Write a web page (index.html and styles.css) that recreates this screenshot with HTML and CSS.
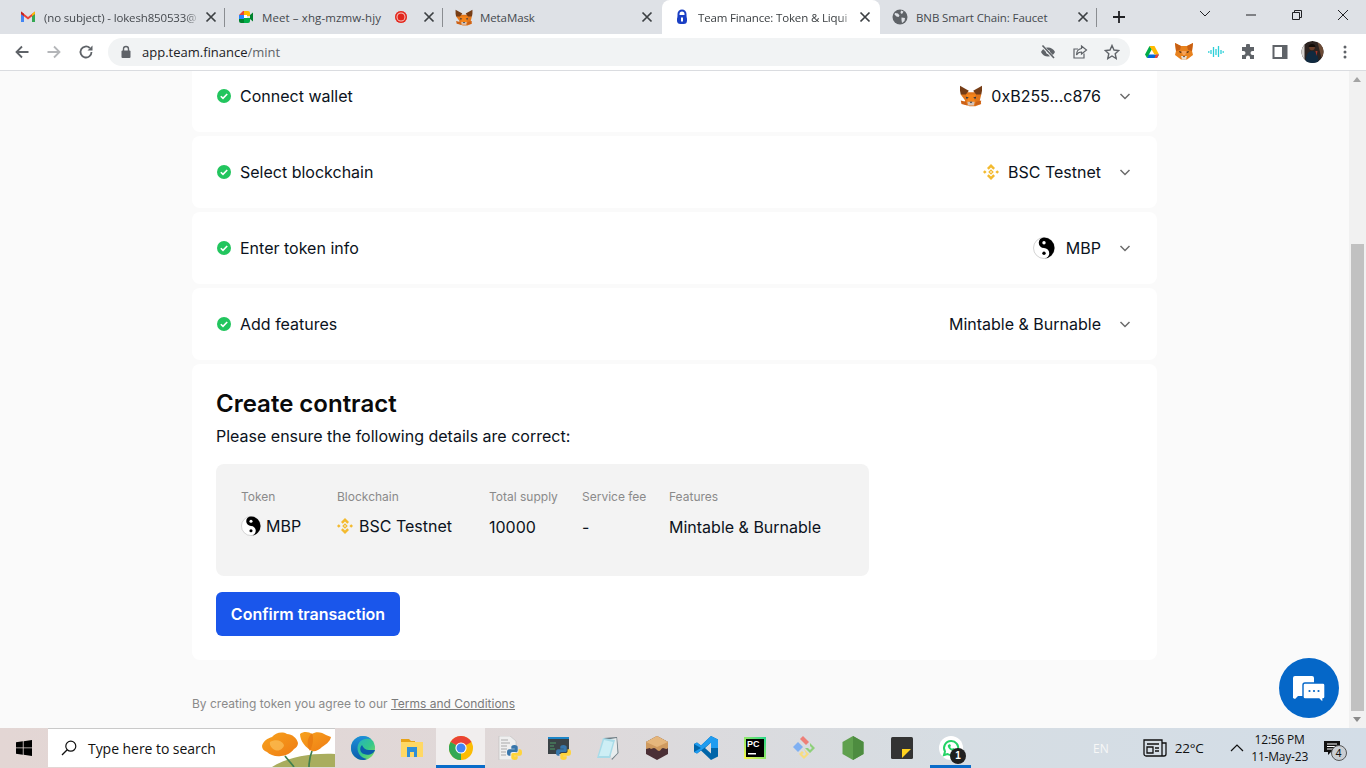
FILE: index.html
```html
<!DOCTYPE html>
<html lang="en">
<head>
<meta charset="utf-8">
<title>Team Finance: Token &amp; Liquidity</title>
<link rel="stylesheet" href="styles.css">
</head>
<body>
<svg class="defs" width="0" height="0" aria-hidden="true">
  <defs>
    <symbol id="fox" viewBox="0 0 32 30">
      <path fill="#e2761b" d="M2 13 8 10h16l6 3-2 8 2 5-8 3h-8l-8-3 2-5z"/>
      <path fill="#763d16" d="M1 1 13 8 9 13 2 13 1 8z"/>
      <path fill="#763d16" d="M31 1 19 8l4 5 7 0 1-5z"/>
      <path fill="#f6851b" d="M9 13h14l-3 6 2 4h-12l2-4z"/>
      <path fill="#d7c1b3" d="M11 23h10l-1 5h-8z"/>
      <path fill="#233447" d="M9 16l4 1-3 2zM23 16l-4 1 3 2zM14 23h4l-2 2z"/>
      <path fill="#cd6116" d="M2 21l7 2 2 5-8-2zM30 21l-7 2-2 5 8-2z"/>
    </symbol>
    <symbol id="bnb" viewBox="0 0 16 16">
      <g fill="#f3ba2f">
        <path d="M8 0 12 4 10.300 5.700 8 3.400 5.700 5.700 4 4z"/>
        <path d="M8 16 4 12 5.700 10.300 8 12.600 10.300 10.300 12 12z"/>
        <path d="M0 8 1.800 6.200 3.600 8 1.800 9.800z"/>
        <path d="M16 8 14.200 6.200 12.400 8 14.200 9.800z"/>
        <path d="M8 5.200 10.800 8 8 10.800 5.200 8zM8 7 7 8l1 1 1-1z" fill-rule="evenodd"/>
      </g>
    </symbol>
    <symbol id="yin" viewBox="0 0 22 22">
      <circle cx="11" cy="11" r="10.500" fill="#fff" stroke="#b5b5b5" stroke-width=".6"/>
      <path fill="#000" d="M11 .5a10.500 10.500 0 0 1 0 21 5.250 5.250 0 0 0 0-10.500 5.250 5.250 0 0 1 0-10.500z"/>
      <circle cx="11" cy="5.750" r="1.700" fill="#fff"/>
      <circle cx="11" cy="16.250" r="1.700" fill="#000"/>
    </symbol>
    <symbol id="check" viewBox="0 0 14 14">
      <circle cx="7" cy="7" r="7" fill="#22c55e"/>
      <path d="M3.800 7.200 6 9.400 10.200 5" fill="none" stroke="#fff" stroke-width="1.600"/>
    </symbol>
    <symbol id="chev" viewBox="0 0 12 12">
      <path d="M1.500 4 6 8.500 10.500 4" fill="none" stroke="#6b6b6b" stroke-width="1.500"/>
    </symbol>
    <symbol id="close" viewBox="0 0 16 16">
      <path d="M3.500 3.500 12.500 12.500M12.500 3.500 3.500 12.500" stroke="#3c4043" stroke-width="1.700" fill="none"/>
    </symbol>
    <symbol id="py" viewBox="0 0 14 14">
      <path fill="#3776ab" d="M7 0C4.500 0 4 1 4 2v1.500h3.200V4H2C.8 4 0 5 0 7s.8 3 2 3h1.200V8.500C3.200 7.300 4 6.500 5.200 6.500h3.300c1 0 1.500-.8 1.500-1.700V2C10 1 9 0 7 0z"/>
      <path fill="#ffd43b" d="M7 14c2.500 0 3-1 3-2v-1.500H6.800V10H12c1.200 0 2-1 2-3s-.8-3-2-3h-1.200v1.500c0 1.200-.8 2-2 2H5.500C4.500 7.500 4 8.300 4 9.200V12c0 1 1 2 3 2z"/>
    </symbol>
  </defs>
</svg>

<header class="tabstrip">
  <div class="tab tab-sep">
    <svg class="tab-icon" viewBox="0 0 16 16"><path fill="#4285f4" d="M1 4v9h3V7z"/><path fill="#34a853" d="M12 7v6h3V4z"/><path fill="#ea4335" d="M1 2.500 8 8l7-5.500V5L8 10.500 1 5z"/><path fill="#c5221f" d="M1 2.500 4 4.800V7L1 5z"/><path fill="#fbbc04" d="M15 2.500 12 4.800V7L15 5z"/></svg>
    <span class="tab-title fade">(no subject) - lokesh850533@</span>
    <svg class="tab-close"><use href="#close"/></svg>
  </div>
  <div class="tab tab-sep">
    <svg class="tab-icon" viewBox="0 0 16 16"><path fill="#00832d" d="M1 9h5v5H3a2 2 0 0 1-2-2z"/><path fill="#ea4335" d="M5 2h5v4H1z"/><path fill="#2684fc" d="M1 6h5v4H1z"/><path fill="#ffba00" d="M6 2h4a2 2 0 0 1 2 2v3H6z"/><path fill="#00ac47" d="M6 9h6v3a2 2 0 0 1-2 2H6z"/><path fill="#00832d" d="M12 6l3-2.500v9L12 10z"/><path fill="#fff" d="M6 6h3v3H6z"/></svg>
    <span class="tab-title tab-title-meet">Meet – xhg-mzmw-hjy</span>
    <span class="rec"></span>
    <svg class="tab-close"><use href="#close"/></svg>
  </div>
  <div class="tab">
    <svg class="tab-icon tab-icon-fox"><use href="#fox"/></svg>
    <span class="tab-title">MetaMask</span>
    <svg class="tab-close"><use href="#close"/></svg>
  </div>
  <div class="tab tab-active">
    <svg class="tab-icon" viewBox="0 0 16 16"><path fill="none" stroke="#1a3fc4" stroke-width="2" d="M8 1.500a3.500 3.500 0 0 1 3.500 3.500v2h-7V5A3.500 3.500 0 0 1 8 1.500z"/><rect x="3" y="6.500" width="10" height="8.500" rx="3.500" fill="#1a3fc4"/><rect x="7" y="8.500" width="2" height="4" fill="#fff"/></svg>
    <span class="tab-title fade">Team Finance: Token &amp; Liqui</span>
    <svg class="tab-close"><use href="#close"/></svg>
  </div>
  <div class="tab tab-sep">
    <svg class="tab-icon" viewBox="0 0 16 16"><circle cx="8" cy="8" r="7.500" fill="#5f6368"/><path fill="#dee1e6" d="M3 4l3 .5 1.500 2-1 1.500-2-.5-2-2zM9 1.500l2.500 1L10 5 8.500 4zM9.500 8.500l3.500.5-.5 3-2.500 2-.5-3z"/></svg>
    <span class="tab-title">BNB Smart Chain: Faucet</span>
    <svg class="tab-close"><use href="#close"/></svg>
  </div>
  <svg class="newtab" viewBox="0 0 14 14"><path d="M7 1v12M1 7h12" stroke="#202124" stroke-width="1.800"/></svg>
  <div class="winctl">
    <svg class="win-btn" viewBox="0 0 46 30"><path d="M18 11l5 5 5-5" fill="none" stroke="#202124"/></svg>
    <svg class="win-btn" viewBox="0 0 46 30"><path d="M18 15h10" stroke="#202124"/></svg>
    <svg class="win-btn" viewBox="0 0 46 30"><path d="M18.500 12.500h7v7h-7zM20.500 12.500v-2h7v7h-2" fill="none" stroke="#202124"/></svg>
    <svg class="win-btn" viewBox="0 0 46 30"><path d="M18 10l10 10M28 10 18 20" stroke="#202124"/></svg>
  </div>
</header>

<nav class="toolbar">
  <span class="tool"><svg viewBox="0 0 16 16"><path d="M14.500 8H2.500M8 2.500 2.500 8 8 13.500" fill="none" stroke="#5f6368" stroke-width="1.800"/></svg></span>
  <span class="tool"><svg viewBox="0 0 16 16"><path d="M1.500 8h12M8 2.500 13.500 8 8 13.500" fill="none" stroke="#b4b6b9" stroke-width="1.800"/></svg></span>
  <span class="tool"><svg viewBox="0 0 16 16"><path d="M13.500 8A5.500 5.500 0 1 1 11.800 4" fill="none" stroke="#5f6368" stroke-width="1.800"/><path d="M14.500 1.500v5h-5z" fill="#5f6368"/></svg></span>
  <div class="omnibox">
    <svg class="lock" viewBox="0 0 12 14"><path d="M3.500 6V4a2.500 2.500 0 0 1 5 0v2" fill="none" stroke="#5f6368" stroke-width="1.400"/><rect x="1.500" y="5.500" width="9" height="7.500" rx="1" fill="#5f6368"/></svg>
    <span class="url">app.team.finance<span class="url-path">/mint</span></span>
    <span class="tool"><svg viewBox="0 0 16 16"><path d="M1 8c1.500-3 4-4.500 7-4.500S13.500 5 15 8c-1.500 3-4 4.500-7 4.500S2.500 11 1 8z" fill="#5f6368"/><circle cx="8" cy="8" r="2" fill="#f1f3f4"/><path d="M2 1.500 14 14.500" stroke="#f1f3f4" stroke-width="3"/><path d="M2.500 1.500 14 14" stroke="#5f6368" stroke-width="1.600"/></svg></span>
    <span class="tool"><svg viewBox="0 0 16 16"><path d="M12 9.500V14H2V5h4" fill="none" stroke="#5f6368" stroke-width="1.200"/><path d="M9.500 2 14.500 6 9.500 10V8C7 8 5.500 9 4.500 11c0-4 2-6 5-6.500z" fill="none" stroke="#5f6368" stroke-width="1.200"/></svg></span>
    <span class="tool"><svg viewBox="0 0 16 16"><path d="M8 1.500 10 6l4.800.5-3.600 3.200 1 4.800L8 12l-4.200 2.500 1-4.800L1.200 6.500 6 6z" fill="none" stroke="#5f6368" stroke-width="1.400"/></svg></span>
  </div>
  <div class="ext">
    <span class="tool"><svg viewBox="0 0 16 16"><path fill="#0066da" d="M4 10.500h11L13 14H3z"/><path fill="#00ac47" d="M5.500 2 1 10.500 3 14 8 5z"/><path fill="#ffba00" d="M5.500 2h5L15 10.500h-4.500z"/><path fill="#ea4335" d="M13 14 15 10.500h-3L10.500 14z"/></svg></span>
    <span class="tool"><svg class="ext-fox" viewBox="0 0 20 19"><path fill="#e8821e" d="M1 1 7 4h6l6-3-1 8 1 4-6 4.500H7L1 13l1-4z"/><path fill="#f6a25a" d="M7 9h6l-2 4H9z"/><path fill="#c85f12" d="M1 1 7 4 6 8 2 9zM19 1 13 4l1 4 4 1z"/><path fill="#e9dccf" d="M7 14h6l-1 3.500H8z"/><path fill="#39241a" d="M5 9l3 1-2 1zM15 9l-3 1 2 1zM9 14h2l-1 1.500z"/></svg></span>
    <span class="tool"><svg viewBox="0 0 16 16"><path d="M0 8h1.500M3 6v4M5.500 3v10M8 5v6M10.500 2v11M13 6v4M14.500 8H16" stroke="#2bcfd8" stroke-width="1.300"/></svg></span>
    <span class="tool"><svg viewBox="0 0 16 16"><path fill="#5f6368" d="M6 1.500a2 2 0 0 1 4 0V3h4v4h-1.500a2 2 0 0 0 0 4H14v4h-4v-1.500a2 2 0 0 0-4 0V15H2v-4H3.500a2 2 0 0 0 0-4H2V3h4z"/></svg></span>
    <span class="tool"><svg viewBox="0 0 16 16"><path d="M1.500 2h13v12h-13z" fill="#fff" stroke="#5f6368" stroke-width="2"/><path d="M10 2h4.500v12H10z" fill="#5f6368"/></svg></span>
    <span class="tool"><svg class="avatar" viewBox="0 0 22 22"><circle cx="11" cy="11" r="11" fill="#2c2320"/><path d="M0 11a11 11 0 0 1 3-7.500V18.500A11 11 0 0 1 0 11z" fill="#d8d4d0"/><path d="M16 1a11 11 0 0 1 6 10 11 11 0 0 1-2 6z" fill="#6b4a36"/><circle cx="10.500" cy="6.500" r="2.800" fill="#6b3f2a"/><path d="M10.500 3a3.500 3.500 0 0 1 3.500 3l-7 0a3.500 3.500 0 0 1 3.500-3z" fill="#120c08"/><path d="M4 22c0-7 2-12 6.500-12S17 15 17 22z" fill="#102a40"/><path d="M14 10h2l-1 5z" fill="#a8342a"/></svg></span>
    <span class="tool tool-menu"><svg viewBox="0 0 16 16"><g fill="#5f6368"><circle cx="8" cy="3" r="1.500"/><circle cx="8" cy="8" r="1.500"/><circle cx="8" cy="13" r="1.500"/></g></svg></span>
  </div>
</nav>

<div class="viewport">
  <main class="page">
    <div class="stack">
      <section class="card row">
        <svg class="check"><use href="#check"/></svg>
        <span class="row-label">Connect wallet</span>
        <svg class="row-fox"><use href="#fox"/></svg>
        <span class="row-value">0xB255...c876</span>
        <svg class="chev"><use href="#chev"/></svg>
      </section>
      <section class="card row">
        <svg class="check"><use href="#check"/></svg>
        <span class="row-label">Select blockchain</span>
        <svg class="row-bnb"><use href="#bnb"/></svg>
        <span class="row-value">BSC Testnet</span>
        <svg class="chev"><use href="#chev"/></svg>
      </section>
      <section class="card row">
        <svg class="check"><use href="#check"/></svg>
        <span class="row-label">Enter token info</span>
        <svg class="row-yin"><use href="#yin"/></svg>
        <span class="row-value">MBP</span>
        <svg class="chev"><use href="#chev"/></svg>
      </section>
      <section class="card row">
        <svg class="check"><use href="#check"/></svg>
        <span class="row-label">Add features</span>
        <span class="row-value">Mintable &amp; Burnable</span>
        <svg class="chev"><use href="#chev"/></svg>
      </section>
      <section class="card create">
        <h1 class="create-title">Create contract</h1>
        <p class="create-sub">Please ensure the following details are correct:</p>
        <div class="summary">
          <div class="sum-col">
            <span class="sum-label">Token</span>
            <span class="sum-value sum-value-icon"><svg class="sum-yin"><use href="#yin"/></svg>MBP</span>
          </div>
          <div class="sum-col">
            <span class="sum-label">Blockchain</span>
            <span class="sum-value sum-value-icon"><svg class="sum-bnb"><use href="#bnb"/></svg>BSC Testnet</span>
          </div>
          <div class="sum-col">
            <span class="sum-label">Total supply</span>
            <span class="sum-value">10000</span>
          </div>
          <div class="sum-col">
            <span class="sum-label">Service fee</span>
            <span class="sum-value">-</span>
          </div>
          <div class="sum-col">
            <span class="sum-label">Features</span>
            <span class="sum-value">Mintable &amp; Burnable</span>
          </div>
        </div>
        <button class="confirm" type="button">Confirm transaction</button>
      </section>
    </div>
    <p class="legal">By creating token you agree to our <a class="legal-link" href="#">Terms and Conditions</a></p>
  </main>
  <div class="scrollbar">
    <span class="sb-arrow sb-up"></span>
    <div class="sb-track"><div class="sb-thumb"></div></div>
    <span class="sb-arrow sb-down"></span>
  </div>
  <button class="chat" type="button" aria-label="Chat">
    <svg viewBox="0 0 32 27" width="32" height="27">
      <path fill="#fff" d="M2 0h17a2 2 0 0 1 2 2v16a2 2 0 0 1-2 2H5l-3 3-2-1V2a2 2 0 0 1 2-2z"/>
      <path fill="#fff" stroke="#0567c8" stroke-width="1.400" d="M12 7h18a2 2 0 0 1 2 2v12a2 2 0 0 1-2 2v4l-4-4H12a2 2 0 0 1-2-2V9a2 2 0 0 1 2-2z"/>
      <g fill="#0567c8"><circle cx="16.500" cy="15" r="1.100"/><circle cx="21" cy="15" r="1.100"/><circle cx="25.500" cy="15" r="1.100"/></g>
    </svg>
  </button>
</div>

<footer class="taskbar">
  <span class="start"><svg viewBox="0 0 16 16" width="16" height="16"><path fill="#000" d="M0 2.200 6.800 1.300V7.500H0zM7.600 1.200 16 0V7.500H7.600zM0 8.300H6.800V14.700L0 13.800zM7.600 8.300H16V16L7.600 14.800z"/></svg></span>
  <div class="search">
    <svg class="search-icon" viewBox="0 0 16 16"><circle cx="9.800" cy="6.200" r="5" fill="none" stroke="#111" stroke-width="1.200"/><path d="M6.200 9.800 1 15" stroke="#111" stroke-width="1.300"/></svg>
    <span class="search-text">Type here to search</span>
    <svg class="search-art" viewBox="0 0 75 38">
      <defs>
        <linearGradient id="petal" x1="0" y1="0" x2="1" y2="1"><stop offset="0" stop-color="#f7a21e"/><stop offset="1" stop-color="#ef7c14"/></linearGradient>
      </defs>
      <path fill="#a9ad5e" d="M12 38C28 28 50 24 75 25v13z"/>
      <path d="M25 27c3 4 6 7 9 11M52 22c-2 5-3 11-3 16" fill="none" stroke="#3f7f4f" stroke-width="1.700"/>
      <path fill="url(#petal)" d="M2 17C3 12 8 9 12 8c3-4 10-6 15-3 5 0 10 4 11 9 0 3-2 5-4 6-3 4-8 7-13 7-5 1-11-1-14-4-3-1-5-3-5-6z"/>
      <path fill="#fbc05a" d="M10 13c5-3 12-2 14 3 0 3-5 7-9 5-3-1-6-5-5-8z" opacity=".7"/>
      <path fill="url(#petal)" d="M40 5c4-3 9-2 12 0 4-3 10-2 14 1l5 2c-1 5-6 8-9 10-3 3-7 5-10 4-6-3-12-10-12-17z"/>
      <path fill="#e87a10" d="M52 4c2 5 1 12-2 18-3-4-4-12 2-18z" opacity=".8"/>
    </svg>
  </div>
  <div class="apps">
    <span class="app"><svg viewBox="0 0 24 24"><defs><linearGradient id="eg" x1="0" y1="0" x2="1" y2="1"><stop offset="0" stop-color="#1fa6d8"/><stop offset=".6" stop-color="#35c88a"/><stop offset="1" stop-color="#8fdc5a"/></linearGradient><linearGradient id="eb" x1="0" y1="0" x2="0" y2="1"><stop offset="0" stop-color="#1e8fd8"/><stop offset="1" stop-color="#0b5cab"/></linearGradient></defs><circle cx="12" cy="12" r="12" fill="url(#eg)"/><path fill="url(#eb)" d="M0 12C0 6 5 0 12 0c3 0 6 1 8 3-5-1-11 0-13 6-2 6 2 13 9 14-1 .5-2.500 1-4 1C5 24 0 18 0 12z"/><path fill="#0b5cab" d="M24 14c-1 4-7 6-11 4-4-1-5-6-2-9 1 3 4 5 7 5 2 0 4 0 6 0z"/></svg></span>
    <span class="app"><svg viewBox="0 0 22 18" class="app-folder"><path fill="#e8a317" d="M0 0h8l2 2h4v4H0z"/><path fill="#ffd864" d="M0 3h22v15H0z"/><path fill="#2f8fd8" d="M6 8h10v10h-3v-5H9v5H6z"/></svg></span>
    <span class="app app-active"><svg viewBox="0 0 24 24"><circle cx="12" cy="12" r="12" fill="#fbbc04"/><path fill="#ea4335" d="M12 12 1.600 6A12 12 0 0 1 22.400 6z"/><path fill="#34a853" d="M12 12 1.600 6A12 12 0 0 0 12 24z"/><circle cx="12" cy="12" r="5.600" fill="#fff"/><circle cx="12" cy="12" r="4.500" fill="#4285f4"/></svg></span>
    <span class="app"><svg viewBox="0 0 24 24"><path fill="#efefef" stroke="#bdbdbd" stroke-width=".6" d="M1 0h11l6 5v19H1z"/><path d="M3 4h7M3 7h9M3 10h6M3 13h6M3 16h5M3 19h5" stroke="#a9a9a9"/><use href="#py" x="9" y="9" width="15" height="15"/></svg></span>
    <span class="app"><svg viewBox="0 0 24 24"><path fill="#3a4246" d="M1 1h21v17H1z"/><path fill="#1c86c8" d="M1 1h21v2H1z"/><path stroke="#4f9c66" d="M3 7h6M3 10h4M3 13h5"/><use href="#py" x="9" y="9" width="15" height="15"/></svg></span>
    <span class="app"><svg viewBox="0 0 24 24"><path fill="#6d7d85" d="M8 2 21 1l1.500 16L16 24z"/><path fill="#e8edee" d="M9 4 20.500 2l1 15-6 6z"/><path fill="#a8dbe8" d="M7 2 19 4l-5 18H1z"/><path fill="#cdeef5" d="M8 4 17 6l-4 14H3z"/></svg></span>
    <span class="app"><svg viewBox="0 0 22 24" class="app-box"><path fill="#4b2f35" d="M11 0 22 6v12l-11 6L0 18V6z"/><path fill="#cf9a5f" d="M0 6 11 0l11 6v6c-2 2-3 0-5 0s-2 3-4 3-3-3-5-3-3 2-4 0l-4 1z"/><path fill="#e5b67c" d="M11 0 22 6l-11 5L0 6z"/></svg></span>
    <span class="app"><svg viewBox="0 0 24 24"><path fill="#0065a9" d="M17 0 24 3.500v17L17 24 7 14.500 3 17.500 0 16V8l3-1.500 4 3zM17 6.500 11 12l6 5.500z"/><path fill="#1f9cf0" d="M17 0 24 3.500v8.500h-7V6.500L7 14.500 3 17.500 0 16l7-4L0 8l3-1.500 4 3z"/></svg></span>
    <span class="app"><svg viewBox="0 0 24 24"><defs><linearGradient id="pc" x1="0" y1="1" x2="1" y2="0"><stop offset="0" stop-color="#fcf84a"/><stop offset="1" stop-color="#21d789"/></linearGradient></defs><path fill="url(#pc)" d="M1 1h22v22H1z"/><path fill="#000" d="M3 3h18v18H3z"/><path fill="#fff" d="M5 17h8v1.500H5z"/></svg><span class="pc-text">PC</span></span>
    <span class="app"><svg viewBox="0 0 24 24"><path fill="#ee7f78" d="M8 3 11 0l6 6-3 3z"/><path fill="#7fb0f2" d="M6 6l5 5-5 5-5-5z"/><path fill="#8ed07a" d="M18 7l5 5-5 5-5-5 3 0 2 2 2-2-2-2z"/><path fill="#f7dc7f" d="M12 13l5 5-5 5-5-5 3-3 2 2-2 1 2 2 2-2z"/></svg></span>
    <span class="app"><svg viewBox="0 0 24 24"><path fill="#5fa04e" d="M12 0 22.500 6v12L12 24 1.500 18V6z"/><path fill="#4d8c40" d="M12 0 22.500 6v12L12 24z"/></svg></span>
    <span class="app"><svg viewBox="0 0 22 22" class="app-sticky"><rect width="22" height="22" rx="1.500" fill="#333"/><path fill="#ffd21f" d="M11 21V12h9z"/></svg></span>
    <span class="app app-active2"><svg viewBox="0 0 24 24"><circle cx="12" cy="12" r="12" fill="#fff"/><path d="M12 5a7 7 0 0 0-6 10.500L5 19l3.600-1A7 7 0 1 0 12 5z" fill="none" stroke="#25d366" stroke-width="2"/><path d="M9 9c-1 2 2 6 6 6l1-2-2-1-1 1-2-2 1-1-1-2z" fill="#25d366"/></svg><span class="wa-badge">1</span></span>
  </div>
  <span class="lang">EN</span>
  <svg class="news" viewBox="0 0 24 18"><path d="M1 1h18v16H3a2 2 0 0 1-2-2zM19 4h4v11a2 2 0 0 1-2 2h-2" fill="none" stroke="#111" stroke-width="1.300"/><path d="M4 5h12M4 8h6v6H4zM12 9h4M12 12h4" fill="none" stroke="#111" stroke-width="1.300"/></svg>
  <span class="temp">22°C</span>
  <svg class="caret" viewBox="0 0 14 8"><path d="M1 7 7 1l6 6" fill="none" stroke="#111" stroke-width="1.200"/></svg>
  <div class="clock"><span>12:56 PM</span><span>11-May-23</span></div>
  <span class="notif">
    <svg viewBox="0 0 16 16" width="16" height="16"><path fill="#111" d="M0 1h16v11H7l-3 3v-3H0z"/><path d="M3 4h10M3 6.500h10M3 9h7" stroke="#fff"/></svg>
    <span class="notif-badge">4</span>
  </span>
</footer>
</body>
</html>
```
FILE: styles.css
```css
* { box-sizing: border-box; }
html, body { margin: 0; height: 100%; }
body {
  width: 1366px;
  height: 768px;
  overflow: hidden;
  display: flex;
  flex-direction: column;
  font-family: "Inter", "Noto Sans", sans-serif;
  color: #0b1220;
  background: #fafafa;
}
.defs { position: absolute; }

/* Browser tab strip */
.tabstrip {
  flex: 0 0 34px;
  display: flex;
  align-items: stretch;
  padding-left: 8px;
  background: #dee1e6;
  font-family: "Open Sans", "Noto Sans", sans-serif;
}
.tab {
  flex: 0 0 218px;
  min-width: 0;
  width: 218px;
  display: flex;
  align-items: center;
  gap: 8px;
  padding: 0 7px 0 12px;
  font-size: 11.5px;
  color: #45494e;
  position: relative;
}
.tab-sep::after {
  content: "";
  position: absolute;
  right: 1px;
  top: 8px;
  height: 19px;
  width: 1px;
  background: #8a8d91;
}
.tab-active {
  background: #fff;
  border-radius: 8px 8px 0 0;
  color: #3c4043;
}
.tab-icon { flex: 0 0 16px; width: 16px; height: 16px; }
.tab-icon-fox { width: 18px; height: 17px; flex-basis: 18px; margin: 0 -1px; }
.tab-title { flex: 1; min-width: 0; white-space: nowrap; letter-spacing: -.1px; }
.tab-title-meet { letter-spacing: .1px; }
.fade {
  margin-right: -6px;
  letter-spacing: -.15px;
  -webkit-mask-image: linear-gradient(to right, #000 90%, transparent);
  mask-image: linear-gradient(to right, #000 90%, transparent);
}
.tab-close { flex: 0 0 16px; width: 16px; height: 16px; }
.rec {
  flex: 0 0 12px;
  height: 12px;
  margin-right: 6px;
  border-radius: 50%;
  background: #e1261c;
  box-shadow: inset 0 0 0 1.500px #e1261c, inset 0 0 0 2.500px #f6c8c4;
}
.newtab { width: 14px; height: 14px; align-self: center; margin-left: 14px; }
.winctl { margin-left: auto; display: flex; align-items: flex-start; }
.win-btn { width: 46px; height: 30px; }

/* Browser toolbar */
.toolbar {
  flex: 0 0 37px;
  display: flex;
  align-items: center;
  padding: 0 5px 1px 6px;
  background: #fff;
  border-bottom: 1px solid #dadce0;
}
.tool {
  flex: 0 0 32px;
  width: 32px;
  height: 28px;
  display: flex;
  align-items: center;
  justify-content: center;
}
.tool > svg { width: 16px; height: 16px; }
.tool-menu { margin-left: 1px; }
.tool > .ext-fox { width: 20px; height: 19px; }
.tool > .avatar { width: 23px; height: 22px; border-radius: 50%; }
.omnibox {
  margin-left: 6px;
  flex: 0 0 1022px;
  height: 28px;
  display: flex;
  align-items: center;
  padding: 0 2px 0 12px;
  border-radius: 14px;
  background: #f1f3f4;
  font-family: "Open Sans", "Noto Sans", sans-serif;
}
.lock { width: 12px; height: 14px; margin-right: 10px; }
.url { flex: 1; font-size: 13px; color: #202124; letter-spacing: 0; }
.url-path { color: #5f6368; }
.ext { margin-left: 6px; display: flex; align-items: center; }

/* Page */
.viewport {
  flex: 1;
  min-height: 0;
  display: flex;
  position: relative;
  overflow: hidden;
}
.page {
  flex: 1;
  min-width: 0;
  padding: 0 192px;
  background: #fafafa;
  margin-top: -11px;
}
.stack { display: flex; flex-direction: column; gap: 4px; }
.card { background: #fff; border-radius: 8px; }
.row {
  height: 72px;
  display: flex;
  align-items: center;
  padding: 0 26px 0 25px;
  font-size: 16px;
  letter-spacing: 0;
}
.check { width: 14px; height: 14px; flex: none; margin-right: 9px; }
.row-label { flex: 1; }
.row-value { white-space: nowrap; }
.row-fox { width: 24px; height: 22px; margin-right: 8px; }
.row-bnb { width: 16px; height: 16px; margin-right: 9px; }
.row-yin { width: 22px; height: 22px; margin-right: 11px; }
.chev { width: 12px; height: 12px; flex: none; margin-left: 18px; }
.create { height: 296px; padding: 24px; }
.create-title {
  margin: 0;
  font-size: 24px;
  line-height: 32px;
  font-weight: 600;
  color: #0a0a0a;
}
.create-sub { margin: 4px 0 0; font-size: 16px; line-height: 24px; }
.summary {
  margin-top: 16px;
  width: 653px;
  height: 112px;
  padding: 25px;
  display: grid;
  grid-template-columns: 96px 152px 93px 87px auto;
  background: #f3f3f3;
  border-radius: 8px;
}
.sum-col { display: flex; flex-direction: column; }
.sum-label { font-size: 12px; line-height: 16px; color: #8a8a8a; }
.sum-value { margin-top: 10px; font-size: 16px; line-height: 24px; white-space: nowrap; }
.sum-value-icon { margin-top: 9px; display: flex; align-items: center; }
.sum-yin { width: 20px; height: 20px; margin-right: 5px; }
.sum-bnb { width: 16px; height: 16px; margin-right: 6px; }
.confirm {
  display: block;
  margin-top: 16px;
  width: 184px;
  height: 44px;
  border: 0;
  border-radius: 6px;
  background: #1a56eb;
  color: #fff;
  font: 600 16px "Inter", sans-serif;
}
.legal { margin: 36px 0 0; font-size: 12px; line-height: 16px; color: #8a8a8a; }
.legal-link { color: #7a7a7a; }

/* Scrollbar */
.scrollbar {
  flex: 0 0 17px;
  display: flex;
  flex-direction: column;
  background: #f1f1f1;
}
.sb-arrow { flex: 0 0 17px; position: relative; }
.sb-arrow::after {
  content: "";
  position: absolute;
  left: 4px;
  top: 6px;
  border-left: 4.500px solid transparent;
  border-right: 4.500px solid transparent;
}
.sb-up::after { border-bottom: 5px solid #a3a3a3; }
.sb-down::after { border-top: 5px solid #8a8a8a; }
.sb-track { flex: 1; padding-top: 156px; }
.sb-thumb { height: 467px; margin: 0 2px; background: #c1c1c1; }
.chat {
  position: absolute;
  left: 1279px;
  top: 587px;
  width: 60px;
  height: 60px;
  padding: 2px 0 0;
  border: 0;
  border-radius: 50%;
  background: #0567c8;
  display: flex;
  align-items: center;
  justify-content: center;
}

/* Windows taskbar */
.taskbar {
  flex: 0 0 40px;
  display: flex;
  align-items: center;
  background: linear-gradient(to right, #e3d6d4 0%, #e0d8d8 35%, #d6dde3 70%, #d3dde7 100%);
  font-family: "Open Sans", "Noto Sans", sans-serif;
  font-size: 12px;
  color: #111;
  position: relative;
}
.start { flex: 0 0 48px; display: flex; justify-content: center; }
.search {
  flex: 0 0 287px;
  align-self: stretch;
  margin-bottom: 1px;
  display: flex;
  align-items: center;
  background: #fff;
  border-top: 1px solid #c9c9c9;
  overflow: hidden;
}
.search-icon { width: 16px; height: 16px; margin: 0 11px 0 13px; flex: none; }
.search-text { flex: 1; font-size: 14px; letter-spacing: -.05px; color: #111; }
.search-art { width: 75px; height: 38px; flex: none; }
.apps { margin-left: 3px; display: flex; align-self: stretch; }
.app {
  flex: 0 0 49px;
  width: 49px;
  display: flex;
  align-items: center;
  justify-content: center;
  position: relative;
}
.app > svg { width: 24px; height: 24px; }
.app > .app-folder { width: 22px; height: 18px; }
.app > .app-box { width: 22px; height: 24px; }
.app > .app-sticky { width: 22px; height: 22px; }
.app-active { background: #f1eeee; border-bottom: 3px solid #0a6cc9; }
.app-active > svg { margin-top: 3px; }
.app-active2 { border-bottom: 3px solid #0a6cc9; margin: 0 4px; flex-basis: 41px; width: 41px; }
.app-active2 > svg { margin-top: 3px; }
.pc-text {
  position: absolute;
  left: 17px;
  top: 11px;
  color: #fff;
  font: 700 9px "Liberation Sans", sans-serif;
}
.wa-badge {
  position: absolute;
  left: 20px;
  top: 20px;
  width: 16px;
  height: 16px;
  border-radius: 50%;
  background: #1f1f1f;
  color: #fff;
  font: 700 10px/16px "Liberation Sans", sans-serif;
  text-align: center;
}
.lang { margin-left: 118px; color: #f7f7f7; font-size: 12px; }
.news { width: 24px; height: 18px; margin-left: 34px; }
.temp { margin-left: 8px; font-size: 13.500px; letter-spacing: -.2px; }
.caret { width: 14px; height: 8px; margin-left: 26px; }
.clock {
  margin-left: 4px;
  width: 64px;
  display: flex;
  flex-direction: column;
  align-items: center;
  line-height: 17px;
  font-size: 12px;
  letter-spacing: -.2px;
}
.notif { position: relative; width: 16px; height: 16px; margin-left: 12px; }
.notif-badge {
  position: absolute;
  left: 7px;
  top: 5px;
  width: 16px;
  height: 16px;
  border-radius: 50%;
  background: #c9ced3;
  border: 1px solid #555;
  font: 11px/14px "Liberation Sans", sans-serif;
  text-align: center;
}
```
